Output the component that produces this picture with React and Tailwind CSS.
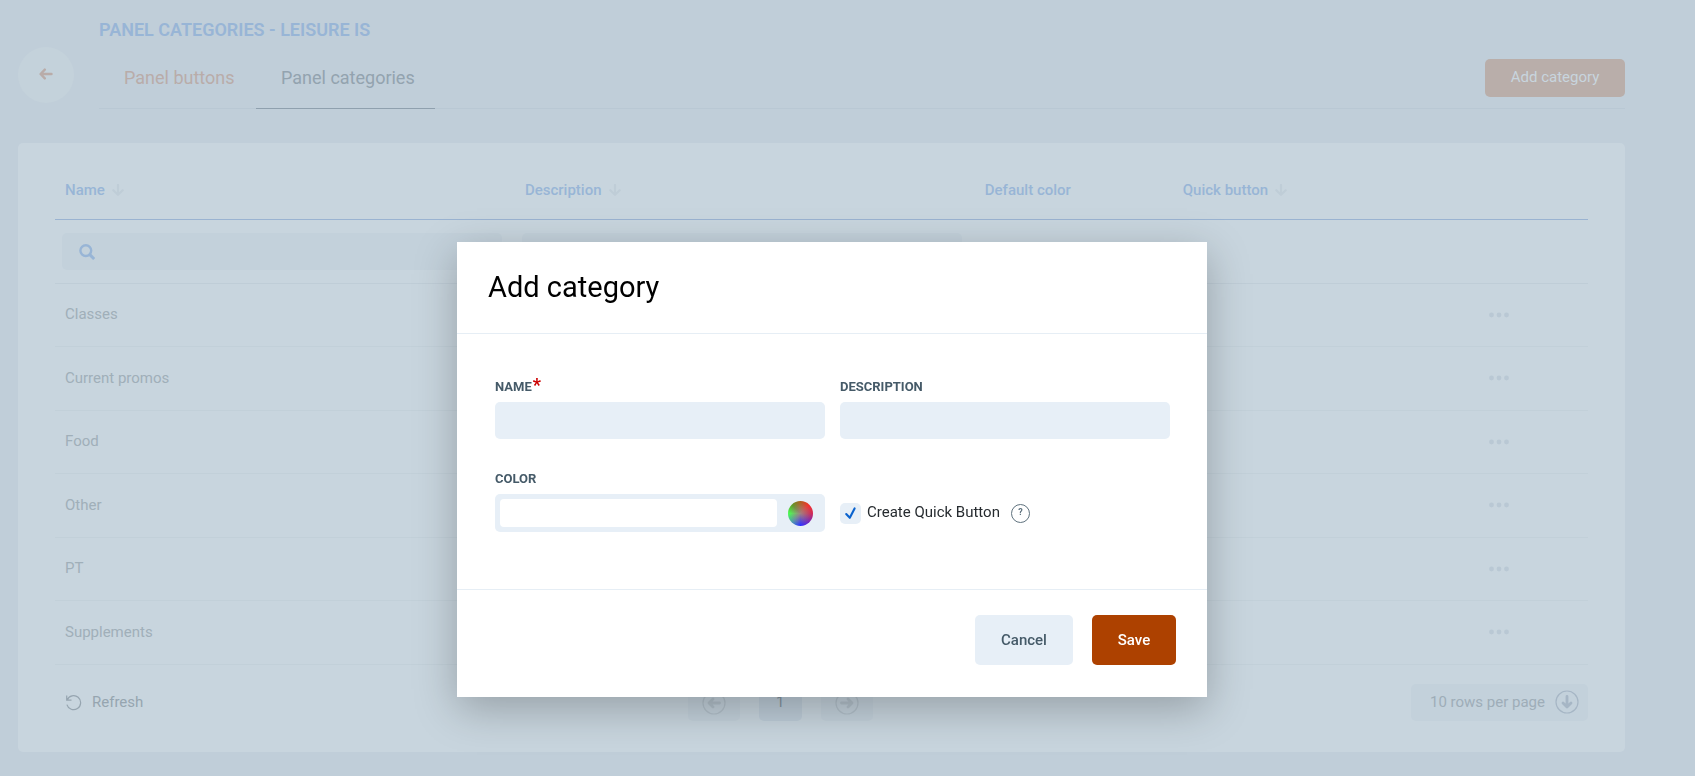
import React, { useState } from "react";

const categories = ["Classes", "Current promos", "Food", "Other", "PT", "Supplements"];

const ArrowDown = ({ className }) => (
  <svg className={className} viewBox="0 0 12 12" fill="none" stroke="currentColor" strokeWidth="2.2" strokeLinecap="round" strokeLinejoin="round">
    <path d="M6 1v9.5M1.3 6.2 6 10.8l4.7-4.6" />
  </svg>
);

const CircleArrow = ({ className, d }) => (
  <svg className={className} viewBox="0 0 24 24" fill="none" stroke="currentColor" strokeLinecap="round" strokeLinejoin="round">
    <circle cx="12" cy="12" r="11" strokeWidth="1.2" />
    <path d={d} strokeWidth="2.8" />
  </svg>
);

const HeaderCell = ({ title, sortable, className }) => (
  <th className={`h-[59px] border-b border-[#9ab3d1] pl-[10px] text-left font-medium text-[#98b5d6] ${className}`}>
    <span className="inline-flex items-center gap-[7px]">
      {title}
      {sortable ? <ArrowDown className="size-3 text-[#bfcdd7]" /> : null}
    </span>
  </th>
);

const Field = ({ id, label, required }) => (
  <div>
    <label htmlFor={id} className="flex h-[26px] items-start pt-px text-[13px] leading-5 font-bold text-[#455a68] uppercase">
      {label}
      {required ? <span className="ml-px text-lg leading-4 font-bold text-[#cc0000]">*</span> : null}
    </label>
    <input id={id} type="text" className="block h-[37px] w-full rounded-[5px] bg-[#e7eff7] px-3 outline-none" />
  </div>
);

const CategoryTable = () => (
  <table className="w-full table-fixed border-separate border-spacing-0">
    <thead>
      <tr>
        <HeaderCell title="Name" sortable className="w-[30%]" />
        <HeaderCell title="Description" sortable className="w-[30%]" />
        <HeaderCell title="Default color" className="w-[198px]" />
        <HeaderCell title="Quick button" sortable className="" />
        <HeaderCell title="" className="w-[179px]" />
      </tr>
    </thead>
    <tbody>
      <tr className="h-16">
        <td className="border-b border-[#bfcdd7] pr-[13px] pl-[7px]">
          <label className="flex h-[37px] items-center rounded-[5px] bg-[#c3d1db] px-[17px]">
            <svg className="size-4 shrink-0 text-[#98b5d6]" viewBox="0 0 16 16" fill="none" stroke="currentColor" strokeWidth="2.4">
              <circle cx="6.8" cy="6.6" r="5.4" />
              <path d="m10.8 10.6 4.4 4.4" strokeWidth="3" />
            </svg>
            <input type="text" aria-label="Search name" className="ml-3 w-full bg-transparent outline-none" />
          </label>
        </td>
        <td className="border-b border-[#bfcdd7] pr-[13px] pl-[7px]">
          <input type="text" aria-label="Search description" className="block h-[37px] w-full rounded-[5px] bg-[#c3d1db] px-4 outline-none" />
        </td>
        <td className="border-b border-[#bfcdd7]" colSpan={3}></td>
      </tr>
      {categories.map((name) => (
        <tr key={name} className="odd:h-16 even:h-[63px]">
          <td className="border-b border-[#c2d0d9] pb-px pl-[10px] text-[#a0afb9]">{name}</td>
          <td className="border-b border-[#c2d0d9]" colSpan={3}></td>
          <td className="border-b border-[#c2d0d9] pb-[2px] text-center">
            <button type="button" aria-label={`${name} options`} className="inline-block align-middle">
              <svg className="h-[6px] w-5 text-[#b9c8d4]" viewBox="0 0 20 6" fill="currentColor">
                <circle cx="2.5" cy="3" r="2.4" />
                <circle cx="10" cy="3" r="2.4" />
                <circle cx="17.5" cy="3" r="2.4" />
              </svg>
            </button>
          </td>
        </tr>
      ))}
    </tbody>
  </table>
);

const TableFooter = () => (
  <div className="flex h-[37px] items-center justify-between">
    <button type="button" className="flex items-center gap-[10px] pr-[6px] pl-[11px] text-[#96a5b0]">
      <svg className="size-4" viewBox="0 0 16 16" fill="none" stroke="currentColor" strokeWidth="1.2">
        <path d="M.7.5v4.6h4.8M1.2 4.9A7 7 0 1 1 .9 9.6" />
      </svg>
      Refresh
    </button>
    <div className="flex h-full gap-[19px]">
      <button type="button" aria-label="Previous page" className="flex w-[52px] items-center justify-center rounded-[5px] bg-[#c3d1db]">
        <CircleArrow className="size-6 text-[#b3c1cb]" d="M17.5 12H7M11 8l-4 4 4 4" />
      </button>
      <button type="button" className="w-[43px] rounded-[5px] bg-[#bdccd8] text-[#8595a1]">1</button>
      <button type="button" aria-label="Next page" className="flex w-[52px] items-center justify-center rounded-[5px] bg-[#c3d1db]">
        <CircleArrow className="size-6 text-[#b3c1cb]" d="M6.5 12H17M13 8l4 4-4 4" />
      </button>
    </div>
    <div className="relative h-full w-[177px]">
      <select aria-label="Rows per page" className="size-full appearance-none rounded-[5px] bg-[#c3d1db] pl-[19px] text-[#9eadb8] outline-none">
        <option>10 rows per page</option>
        <option>25 rows per page</option>
      </select>
      <CircleArrow className="pointer-events-none absolute top-[6px] right-[9px] size-6 text-[#a6b6c5]" d="M12 6.5V17M8 13l4 4 4-4" />
    </div>
  </div>
);

const AddCategoryDialog = () => {
  const [quickButton, setQuickButton] = useState(true);
  return (
    <div className="fixed inset-0 flex items-start justify-center overflow-auto pt-[242px] pr-[31px]">
      <form
        role="dialog"
        aria-labelledby="dialog-title"
        className="w-[750px] bg-white shadow-[0_12px_40px_rgba(0,0,0,0.25)]"
        onSubmit={(e) => e.preventDefault()}
      >
        <h2 id="dialog-title" className="flex h-[92px] items-center border-b border-[#e6eef5] px-[31px] text-[29px] text-black">
          Add category
        </h2>
        <div className="grid grid-cols-2 gap-x-[15px] gap-y-[29px] pt-[42px] pr-[37px] pb-[57px] pl-[38px]">
          <Field id="name" label="Name" required />
          <Field id="description" label="Description" />
          <div>
            <label htmlFor="color" className="flex h-[26px] items-start pt-px text-[13px] leading-5 font-bold text-[#455a68] uppercase">
              Color
            </label>
            <div className="flex h-[38px] items-center rounded-[5px] bg-[#e7eff7] pr-3 pl-[5px]">
              <input id="color" type="text" className="h-7 min-w-0 flex-1 rounded-sm bg-white px-2 outline-none" />
              <button
                type="button"
                aria-label="Pick a color"
                className="ml-[11px] size-[25px] rounded-full bg-[radial-gradient(circle,#a08080_0%,#a0808000_65%),conic-gradient(#b06020,#f53028_12%,#d02858_25%,#7828b8_37%,#3030ff_50%,#5098b0_62%,#48ff50_75%,#609828_88%,#b06020)]"
              />
            </div>
          </div>
          <div className="flex items-center pt-[26px] text-[#262b2f]">
            <label className="flex items-center gap-[6px]">
              <span className="relative size-[21px]">
                <input
                  type="checkbox"
                  checked={quickButton}
                  onChange={(e) => setQuickButton(e.target.checked)}
                  className="block size-[21px] appearance-none rounded-[5px] bg-[#e7eff7]"
                />
                {quickButton ? (
                  <svg className="pointer-events-none absolute inset-0 size-[21px] text-[#0b63ce]" viewBox="0 0 21 21" fill="none" stroke="currentColor" strokeWidth="2.1" strokeLinecap="round" strokeLinejoin="round">
                    <path d="m6.2 11 3.6 3.8L14.6 5.4" />
                  </svg>
                ) : null}
              </span>
              <span className="pb-[2px]">Create Quick Button</span>
            </label>
            <button type="button" aria-label="Help" className="ml-[11px] flex size-[19px] items-center justify-center rounded-full border border-[#5f727e] text-[9px] font-bold text-[#5f727e]">
              ?
            </button>
          </div>
        </div>
        <div className="flex h-[108px] items-start justify-end gap-[19px] border-t border-[#e6eef5] px-[31px] pt-[25px] font-medium">
          <button type="button" className="h-[50px] w-[98px] rounded-[5px] bg-[#e7eff7] text-[#455a68]">Cancel</button>
          <button type="submit" className="h-[50px] w-[84px] rounded-[5px] bg-[#ad4100] text-white">Save</button>
        </div>
      </form>
    </div>
  );
};

const App = () => (
  <div className="min-h-screen bg-[#c0ced9] pr-[70px] pl-[18px] font-[Roboto,sans-serif] text-[15px]">
    <header className="flex gap-[25px]">
      <button type="button" aria-label="Back" className="mt-[47px] flex size-14 shrink-0 items-center justify-center rounded-full bg-[#c4d2db] pb-[2px] text-[#b9aca9]">
        <svg className="h-3 w-[14px]" viewBox="0 0 14 12" fill="none" stroke="currentColor" strokeWidth="2.4" strokeLinecap="round" strokeLinejoin="round">
          <path d="M12.5 6H2M5.8 1.6 1.6 6l4.2 4.4" />
        </svg>
      </button>
      <div className="min-w-0 flex-1">
        <h1 className="pt-4 text-lg leading-7 font-semibold text-[#98b5d6] uppercase">Panel categories - Leisure IS</h1>
        <nav className="flex h-[65px] border-b border-[#b9c8d4] text-lg">
          <a href="#buttons" className="flex h-[65px] w-[157px] items-center pt-[3px] pl-[25px] text-[#b9aca9]">Panel buttons</a>
          <a href="#categories" className="flex h-[65px] w-[179px] items-center border-b border-[#8fa0ae] pt-1 pl-[25px] text-[#93a3af]">Panel categories</a>
          <button type="button" className="mt-[15px] ml-auto h-[38px] w-[140px] rounded-[5px] bg-[#b9aeaa] text-[15px] text-[#c8d5de]">
            Add category
          </button>
        </nav>
      </div>
    </header>
    <main className="mt-[34px] rounded-[5px] bg-[#c8d5de] px-[37px] pt-[18px] pb-[31px]">
      <CategoryTable />
      <div className="pt-[19px]">
        <TableFooter />
      </div>
    </main>
    <AddCategoryDialog />
  </div>
);

export default App;
